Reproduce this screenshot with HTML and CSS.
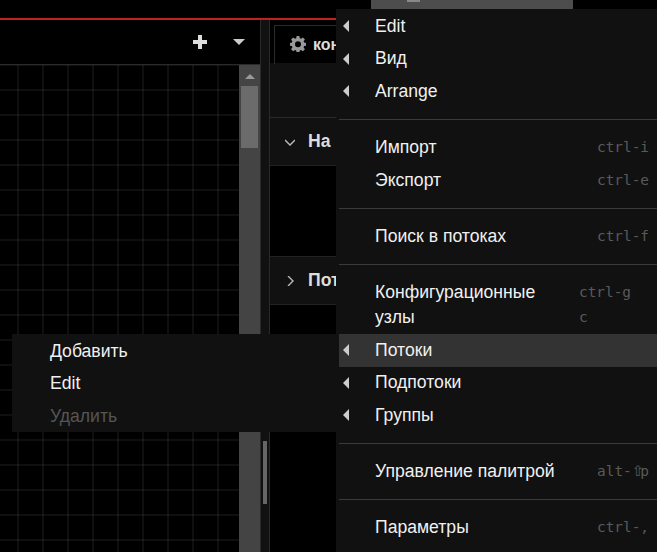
FILE: index.html
```html
<!DOCTYPE html>
<html lang="ru">
<head>
    <meta charset="UTF-8">
    <meta name="viewport" content="width=device-width, initial-scale=1.0">
    <title>Node-RED</title>
    <link rel="stylesheet" href="styles.css">
</head>
<body>

<div class="app">
    <div class="topbar"></div>

    <div class="main">
        <div class="workspace">
            <div class="ws-header">
                <svg class="ws-plus" width="14" height="14" viewBox="0 0 14 14"><path d="M5 0h4v5h5v4H9v5H5V9H0V5h5z"/></svg>
                <span class="ws-caret"></span>
            </div>
            <div class="ws-body">
                <div class="grid"></div>
                <div class="scrollbar">
                    <span class="scroll-up"></span>
                    <div class="scroll-thumb"></div>
                </div>
            </div>
        </div>

        <div class="separator">
            <div class="separator-thumb"></div>
        </div>

        <div class="sidebar">
            <div class="side-tabs">
                <div class="side-tab">
                    <svg width="16" height="16" viewBox="0 0 16 16"><path fill-rule="evenodd" d="M6.6 0h2.8l.4 2.2 1.2.5L12.900 1.400l2 2-1.300 1.900.5 1.200 1.900.4v2.800l-1.900.4-.5 1.200 1.300 1.900-2 2-1.900-1.300-1.200.5-.4 1.900H6.600l-.4-1.900-1.200-.5-1.900 1.300-2-2 1.300-1.900-.5-1.200L0 9.800V7l1.900-.4.500-1.200L1.100 3.400l2-2L5 2.700l1.200-.5zM8 5.300a3 3 0 1 0 0 6 3 3 0 0 0 0-6z"/></svg>
                    <span>конфигурация</span>
                </div>
            </div>
            <div class="side-toolbar"></div>
            <div class="section-head">
                <svg class="chevron" width="10" height="10" viewBox="0 0 10 10"><path d="M0 3l5 5 5-5"/></svg>
                <span>На всех потоках</span>
            </div>
            <div class="section-body"></div>
            <div class="section-head">
                <svg class="chevron" width="10" height="10" viewBox="0 0 10 10"><path d="M3 0l5 5-5 5"/></svg>
                <span>Потоки</span>
            </div>
        </div>
    </div>
</div>

<div class="deploy-bar"><span class="deploy-thumb"></span></div>

<div class="menu menu-context">
    <div class="menu-row">Добавить</div>
    <div class="menu-row">Edit</div>
    <div class="menu-row disabled">Удалить</div>
</div>

<div class="menu menu-main">
    <div class="menu-row"><span class="arrow"></span>Edit</div>
    <div class="menu-row"><span class="arrow"></span>Вид</div>
    <div class="menu-row"><span class="arrow"></span>Arrange</div>
    <div class="divider"></div>
    <div class="menu-row">Импорт<kbd>ctrl-i</kbd></div>
    <div class="menu-row">Экспорт<kbd>ctrl-e</kbd></div>
    <div class="divider"></div>
    <div class="menu-row">Поиск в потоках<kbd>ctrl-f</kbd></div>
    <div class="divider"></div>
    <div class="menu-row tall">
        <span>Конфигурационные<br>узлы</span>
        <kbd>ctrl-g<br>c</kbd>
    </div>
    <div class="menu-row active"><span class="arrow"></span>Потоки</div>
    <div class="menu-row"><span class="arrow"></span>Подпотоки</div>
    <div class="menu-row"><span class="arrow"></span>Группы</div>
    <div class="divider"></div>
    <div class="menu-row">Управление палитрой<kbd>alt-<span class="shift">⇧</span>p</kbd></div>
    <div class="divider"></div>
    <div class="menu-row">Параметры<kbd>ctrl-,</kbd></div>
</div>

</body>
</html>
```

FILE: styles.css
```css
html, body {
    margin: 0;
    padding: 0;
    height: 100%;
    overflow: hidden;
    background-color: #000;
    font-family: "Liberation Sans", Arial, sans-serif;
    font-size: 17.6px;
}
.app {
    display: flex;
    flex-direction: column;
    height: 552px;
}
.topbar {
    height: 18px;
    flex: none;
    border-bottom: 2px solid #c02020;
}
.main {
    display: flex;
    flex: 1;
    min-height: 0;
}

/* workspace */
.workspace {
    width: 260px;
    flex: none;
    display: flex;
    flex-direction: column;
    border-right: 1px solid #2a2a2a;
}
.ws-header {
    height: 44px;
    flex: none;
    display: flex;
    align-items: center;
    justify-content: flex-end;
    gap: 26px;
    padding: 0 15px 0 0;
    border-bottom: 1px solid #2a2a2a;
}
.ws-plus {
    fill: #ddd;
}
.ws-caret {
    width: 0;
    height: 0;
    border-left: 6px solid transparent;
    border-right: 6px solid transparent;
    border-top: 6px solid #ccc;
}
.ws-body {
    flex: 1;
    display: flex;
    min-height: 0;
}
.grid {
    flex: 1;
    background-color: #000;
    background-image:
        linear-gradient(to right, rgba(255, 255, 255, 0.06) 2px, transparent 2px),
        linear-gradient(to bottom, rgba(255, 255, 255, 0.06) 2px, transparent 2px);
    background-size: 25px 25px;
    background-position: 17px 24px;
}
.scrollbar {
    width: 21px;
    flex: none;
    background-color: #444;
    display: flex;
    flex-direction: column;
    align-items: center;
}
.scroll-up {
    width: 0;
    height: 0;
    margin-top: 9px;
    border-left: 5px solid transparent;
    border-right: 5px solid transparent;
    border-bottom: 5px solid #999;
}
.scroll-thumb {
    width: 17px;
    height: 62px;
    margin-top: 7px;
    background-color: #6b6b6b;
}

/* separator */
.separator {
    width: 8px;
    flex: none;
    background-color: #111;
    border-right: 1px solid #2a2a2a;
    padding-top: 421px;
}
.separator-thumb {
    width: 4px;
    height: 63px;
    margin-left: 2px;
    background-color: #666;
}

/* sidebar */
.sidebar {
    flex: 1;
    min-width: 0;
    overflow: hidden;
}
.side-tabs {
    height: 44px;
    padding: 5px 0 0 4px;
    box-sizing: border-box;
    border-bottom: 1px solid #111;
}
.side-tab {
    height: 39px;
    width: 200px;
    box-sizing: border-box;
    display: flex;
    align-items: center;
    gap: 7px;
    padding-left: 15px;
    border: 1px solid #2a2a2a;
    border-bottom: none;
    color: #ddd;
    font-weight: bold;
    font-size: 16px;
}
.side-tab svg {
    fill: #999;
    flex: none;
    margin-top: -3px;
}
.side-toolbar {
    height: 53px;
    background-color: #111;
    border-bottom: 1px solid #2a2a2a;
}
.section-head {
    height: 47px;
    display: flex;
    align-items: center;
    gap: 13px;
    padding-left: 15px;
    background-color: #111;
    border-bottom: 1px solid #222;
    color: #ddd;
    font-weight: bold;
    white-space: nowrap;
}
.chevron {
    fill: none;
    stroke: #bbb;
    stroke-width: 1.4;
    flex: none;
}
.section-body {
    height: 90px;
    background-color: #000;
    border-bottom: 1px solid #222;
}

/* menus */
.deploy-bar {
    position: absolute;
    left: 371px;
    top: 0;
    width: 202px;
    height: 9px;
    background-color: #4d4d4d;
}
.deploy-thumb {
    display: block;
    width: 13px;
    height: 2px;
    margin-left: 36px;
    background-color: #888;
}
.menu {
    position: absolute;
    background-color: #111;
    color: #f0f0f0;
}
.menu-context {
    left: 12px;
    top: 334px;
    width: 324px;
    padding-top: 1px;
    height: 98px;
    box-sizing: border-box;
}
.menu-context .menu-row {
    padding-left: 38px;
}
.menu-main {
    left: 336px;
    top: 9px;
    width: 321px;
    height: 543px;
    padding: 1.2px 0 0 3px;
    box-sizing: border-box;
}
.menu-row {
    position: relative;
    height: 32.5px;
    display: flex;
    align-items: center;
    justify-content: space-between;
    padding: 0 8px 0 36px;
    line-height: 25px;
    white-space: nowrap;
}
.menu-row.tall {
    height: 57.6px;
    align-items: flex-start;
    padding-top: 3px;
    padding-bottom: 0;
    box-sizing: border-box;
}
.menu-row.tall kbd {
    width: 53px;
    margin-right: 17px;
    line-height: 25px;
}
.menu-row.active {
    background-color: #333;
}
.menu-row.disabled {
    color: #555;
}
.arrow {
    position: absolute;
    left: 4px;
    top: 50%;
    margin-top: -6px;
    width: 0;
    height: 0;
    border-top: 6px solid transparent;
    border-bottom: 6px solid transparent;
    border-right: 6px solid #ccc;
}
.divider {
    height: 1px;
    margin: 11.4px 0;
    background-color: #3a3a3a;
}
kbd {
    font-family: "DejaVu Sans Mono", monospace;
    font-size: 14.4px;
    color: #5a5a5a;
}
.shift {
    font-family: "DejaVu Sans", sans-serif;
    font-size: 15px;
    line-height: 1;
    letter-spacing: -4px;
}
```
